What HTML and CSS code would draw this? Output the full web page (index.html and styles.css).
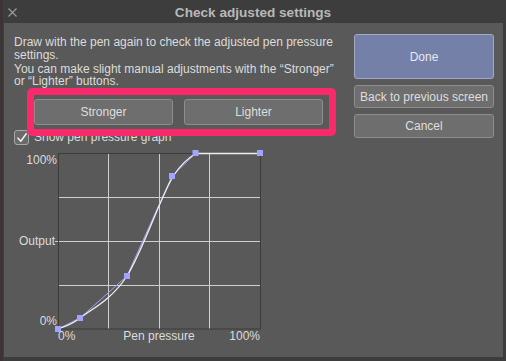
FILE: index.html
```html
<!DOCTYPE html>
<html>
<head>
<meta charset="utf-8">
<link rel="stylesheet" href="styles.css">
</head>
<body>
<div class="window">
  <div class="titlebar">
    <svg class="close" width="9" height="9" viewBox="0 0 9 9"><path d="M0.5 0.5L8.5 8.5M8.5 0.5L0.5 8.5" stroke="#9a9a9a" stroke-width="1.2" fill="none"/></svg>
    <div class="title">Check adjusted settings</div>
  </div>
  <div class="panel">
    <div class="left">
      <p class="desc">Draw with the pen again to check the adjusted pen pressure settings.</p>
      <p class="desc desc2">You can make slight manual adjustments with the “Stronger” or “Lighter” buttons.</p>
      <div class="adjust">
        <button class="btn adj">Stronger</button>
        <button class="btn adj">Lighter</button>
        <div class="highlight"></div>
      </div>
      <label class="check">
        <span class="box"><svg width="12" height="12" viewBox="0 0 12 12"><path d="M2 6.2L4.8 9.2L10.2 1.8" stroke="#eeeeee" stroke-width="1.6" fill="none" stroke-linecap="round" stroke-linejoin="round"/></svg></span>
        <span>Show pen pressure graph</span>
      </label>
      <div class="graph">
        <div class="ylabels">
          <span class="y-top">100%</span>
          <span class="y-mid">Output<i class="tick"></i></span>
          <span class="y-bot">0%</span>
        </div>
        <svg class="plot" width="203" height="176" viewBox="0 0 203 176">
          <g stroke="#cfcfcf" stroke-width="1">
            <line x1="50.5" y1="0" x2="50.5" y2="176"/>
            <line x1="101.5" y1="0" x2="101.5" y2="176"/>
            <line x1="151.5" y1="0" x2="151.5" y2="176"/>
            <line x1="0" y1="44.5" x2="203" y2="44.5"/>
            <line x1="0" y1="88.5" x2="203" y2="88.5"/>
            <line x1="0" y1="132.5" x2="203" y2="132.5"/>
          </g>
          <rect x="0.5" y="0.5" width="202" height="175.5" fill="none" stroke="#3c3c3c" stroke-width="1"/>
          <polyline points="0,176 22,165 69,123 114,23 138,0" fill="none" stroke="#a3a3ff" stroke-width="1"/>
          <path d="M0 176 C3.7 174.2 10.5 173.8 22 165 C33.5 156.2 53.7 146.7 69 123 C84.3 99.3 104 40 116 22 C124 10 131 4.5 138 0.5 L202 0.5" fill="none" stroke="#eeeeee" stroke-width="1.3"/>
          <g fill="#a3a3ff">
            <rect x="-3" y="173" width="6" height="6"/>
            <rect x="19" y="162" width="6" height="6"/>
            <rect x="66" y="120" width="6" height="6"/>
            <rect x="111" y="20" width="6" height="6"/>
            <rect x="134.5" y="-3" width="6" height="6"/>
            <rect x="199" y="-3" width="6" height="6"/>
          </g>
        </svg>
        <div class="spacer"></div>
        <div class="xlabels">
          <span class="xl-start">0%</span>
          <span class="xl-mid">Pen pressure</span>
          <span class="xl-end">100%</span>
        </div>
      </div>
    </div>
    <div class="right">
      <button class="btn done">Done</button>
      <button class="btn side">Back to previous screen</button>
      <button class="btn side cancel">Cancel</button>
    </div>
  </div>
</div>
</body>
</html>
```

FILE: styles.css
```css
html, body {
  margin: 0;
  padding: 0;
}
body {
  width: 506px;
  height: 361px;
  overflow: hidden;
  background: #3b3535;
  font-family: "Liberation Sans", Arial, sans-serif;
  font-size: 12px;
  color: #dcdcdc;
}
.window {
  width: 506px;
  height: 361px;
  background: #3d3d3d;
  display: flex;
  flex-direction: column;
  box-sizing: border-box;
  border-left: 3px solid #3b3535;
}
.titlebar {
  height: 23px;
  flex: none;
  display: flex;
  align-items: center;
  position: relative;
}
.close {
  position: absolute;
  left: 5px;
  top: 8px;
}
.title {
  flex: 1;
  text-align: center;
  font-weight: bold;
  font-size: 13.6px;
  color: #b8b8b8;
  margin-left: -3px;
  margin-top: 1px;
}
.panel {
  flex: none;
  height: 334px;
  margin: 0 3px 0 1px;
  background: #595959;
  display: flex;
  padding: 11px 9px 0 10px;
  box-sizing: border-box;
}
.left {
  flex: 1;
  display: flex;
  flex-direction: column;
}
.right {
  width: 140px;
  flex: none;
  display: flex;
  flex-direction: column;
  gap: 6px;
}
.desc {
  margin: 2px 0 0 0;
  line-height: 12.5px;
  width: 330px;
}
.desc2 {
  margin-top: 1.5px;
}
.btn {
  font-family: "Liberation Sans", Arial, sans-serif;
  font-size: 12px;
  color: #dedede;
  background: #6e6e6e;
  border: 1px solid #8d8d8d;
  border-radius: 3px;
  padding: 0;
  margin: 0;
  box-sizing: border-box;
}
.adjust {
  position: relative;
  display: flex;
  gap: 11px;
  margin: 11.5px 0 0 20px;
  width: 289px;
}
.adj {
  width: 139px;
  height: 26px;
}
.highlight {
  position: absolute;
  left: -7px;
  top: -11px;
  right: -13px;
  bottom: -10.5px;
  border: 7px solid #f92a6b;
  border-radius: 5px;
  z-index: 2;
}
.check {
  display: flex;
  align-items: center;
  gap: 5px;
  margin-top: 5px;
  height: 15px;
  line-height: 15px;
  color: #dcdcdc;
}
.box {
  width: 13px;
  height: 13px;
  border: 1px solid #a8a8a8;
  border-radius: 3px;
  background: #6a6a6a;
  display: flex;
  align-items: center;
  justify-content: center;
}
.graph {
  margin-top: 8px;
  display: grid;
  grid-template-columns: 44px 203px;
  grid-template-rows: 176px 15px;
}
.ylabels {
  position: relative;
  display: flex;
  flex-direction: column;
  justify-content: space-between;
  align-items: flex-end;
  line-height: 15px;
}
.y-top {
  margin-right: 1px;
}
.y-mid {
  display: flex;
  align-items: center;
}
.tick {
  display: block;
  width: 3px;
  height: 1px;
  background: #cfcfcf;
}
.y-bot {
  margin-right: 1px;
}
.plot {
  display: block;
  overflow: visible;
}
.xlabels {
  display: grid;
  grid-template-columns: 1fr auto 1fr;
  line-height: 15px;
  padding: 0 1px 0 0;
}
.xl-end {
  text-align: right;
}
.done {
  height: 45px;
  background: #7580a8;
  border-color: #a2a9c2;
  color: #e8e8f0;
}
.side {
  height: 23px;
}
.cancel {
  height: 24px;
}
```
